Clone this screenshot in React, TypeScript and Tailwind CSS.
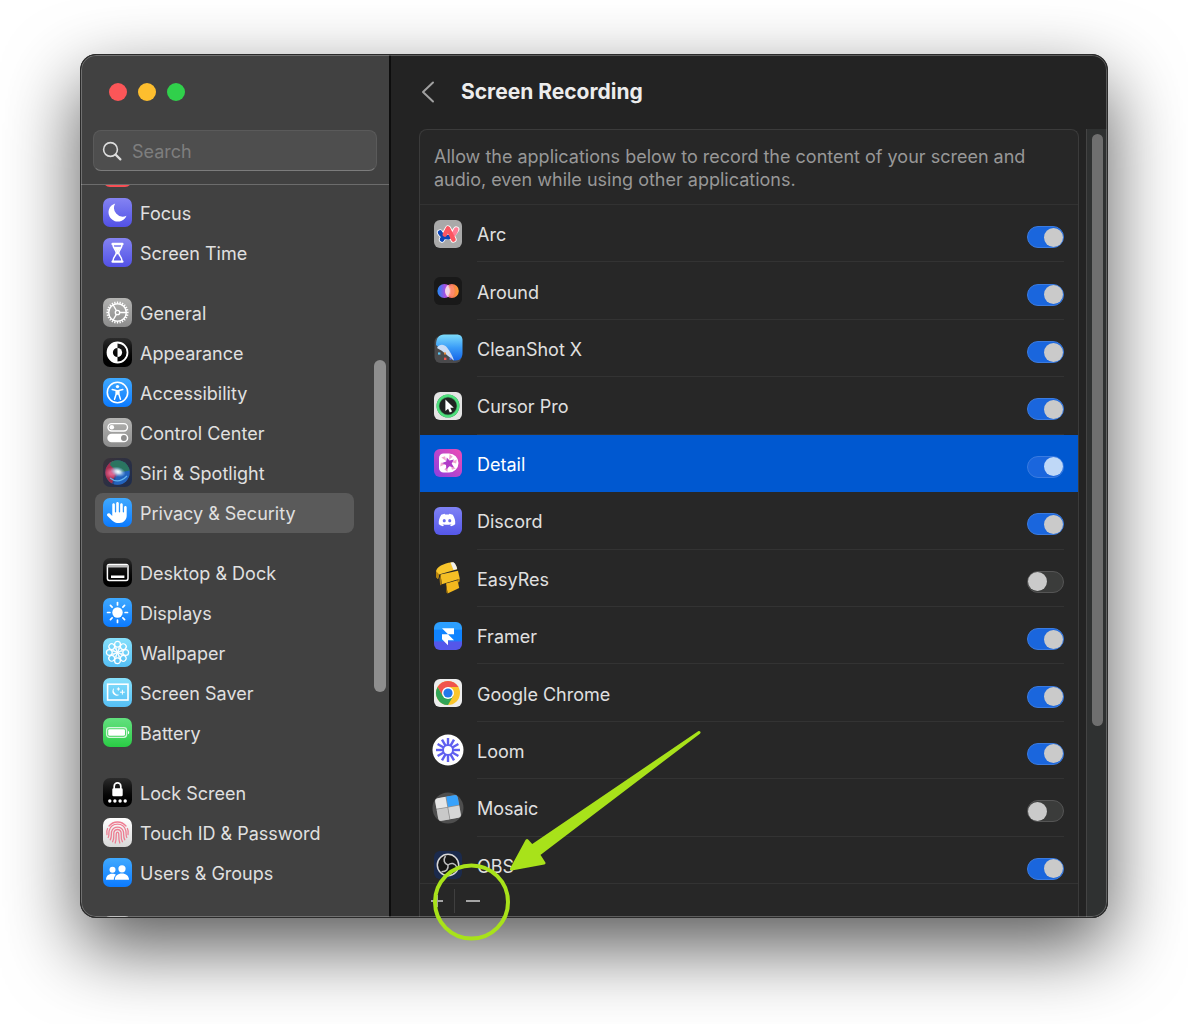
import { useState, type ReactNode } from 'react';
import { FaDiscord, FaHand } from 'react-icons/fa6';
import clsx from 'clsx';

const PURPLE = 'bg-linear-to-b from-[#8583f2] to-[#5350e6]';
const GRAY = 'bg-linear-to-b from-[#b4b4b2] to-[#8c8c8c]';
const BLACK = 'bg-linear-to-b from-[#2c2c2c] to-black';
const BLUE = 'bg-linear-to-b from-[#3fa9ff] to-[#0a7aff]';
const CYAN = 'bg-linear-to-b from-[#86e0fb] to-[#55bff5]';
const GREEN = 'bg-linear-to-b from-[#62e17f] to-[#28cc44]';

function Glyph({ children }: { children: ReactNode }) {
    return (
        <svg viewBox="0 0 29 29" className="size-[29px]" fill="none" aria-hidden="true">
            {children}
        </svg>
    );
}

const ring = (count: number) => Array.from({ length: count }, (_, i) => (360 / count) * i);

const glyphs: Record<string, ReactNode> = {
    focus: (
        <Glyph>
            <path d="M12.2 5.4a9.3 9.3 0 1 0 11.3 12.3A8.8 8.8 0 0 1 12.2 5.4z" fill="#fff" />
        </Glyph>
    ),
    hourglass: (
        <Glyph>
            <path d="M9.6 6h9.8M9.6 23.6h9.8" stroke="#fff" strokeWidth="2.4" strokeLinecap="round" />
            <path d="M10 6.5c0 4.2 3.3 5 3.3 8.2S10 18.6 10 23M19 6.5c0 4.2-3.3 5-3.3 8.2s3.3 3.9 3.3 8.3" stroke="#fff" strokeWidth="1.6" />
            <path d="M10.6 8.800h7.800c-.7 2-2.800 3.200-3.200 5v2.500h-1.400v-2.500c-.4-1.800-2.500-3-3.200-5z" fill="#fff" />
        </Glyph>
    ),
    gear: (
        <Glyph>
            {ring(24).map(a => (
                <path key={a} d="M14.5 3.4v2.2" stroke="#fff" strokeWidth="1.3" transform={`rotate(${a} 14.5 14.5)`} />
            ))}
            <circle cx="14.5" cy="14.5" r="8.8" stroke="#fff" strokeWidth="1.5" />
            <circle cx="14.5" cy="14.5" r="2.2" stroke="#fff" strokeWidth="1.3" />
            {[90, 210, 330].map(a => (
                <path key={a} d="M14.5 12.3V5.7" stroke="#fff" strokeWidth="1.3" transform={`rotate(${a} 14.5 14.5)`} />
            ))}
        </Glyph>
    ),
    appearance: (
        <Glyph>
            <circle cx="14.5" cy="14.5" r="10" stroke="#fff" strokeWidth="1.8" />
            <path d="M14.5 4.5a10 10 0 0 0 0 20v-5.400a4.600 4.600 0 0 1 0-9.200z" fill="#fff" />
            <path d="M14.5 9.900a4.600 4.600 0 0 1 0 9.200z" fill="#fff" />
        </Glyph>
    ),
    accessibility: (
        <Glyph>
            <circle cx="14.5" cy="14.5" r="10.2" stroke="#fff" strokeWidth="1.6" />
            <circle cx="14.5" cy="8.6" r="1.7" fill="#fff" />
            <path d="M9.2 11.6l4 .9v3.500L11.5 21.200M19.800 11.600l-4 .9v3.500l1.700 5.200" stroke="#fff" strokeWidth="1.5" strokeLinecap="round" strokeLinejoin="round" />
            <path d="M12.800 12h3.400v4.800h-3.400z" fill="#fff" />
        </Glyph>
    ),
    controls: (
        <Glyph>
            <rect x="5" y="5.6" width="19.5" height="7.4" rx="3.7" stroke="#fff" strokeWidth="1.4" />
            <circle cx="8.8" cy="9.3" r="2.3" fill="#fff" />
            <rect x="4.3" y="15.7" width="21" height="8.6" rx="4.3" fill="#fff" />
            <circle cx="20.900" cy="20" r="2.900" fill="#8f8f8f" />
        </Glyph>
    ),
    siri: (
        <Glyph>
            <defs>
                <radialGradient id="siri-core">
                    <stop offset="0" stopColor="#fff" />
                    <stop offset=".35" stopColor="#cfe6f5" stopOpacity=".9" />
                    <stop offset="1" stopColor="#7fb4e8" stopOpacity="0" />
                </radialGradient>
                <radialGradient id="siri-pink">
                    <stop offset=".3" stopColor="#e0628c" />
                    <stop offset="1" stopColor="#e0628c" stopOpacity="0" />
                </radialGradient>
                <clipPath id="siri-orb">
                    <circle cx="14.5" cy="14.5" r="12.2" />
                </clipPath>
            </defs>
            <g clipPath="url(#siri-orb)">
                <rect width="29" height="29" fill="#2b4a8c" />
                <path d="M0 0h10l3 13-5 16H0z" fill="#a52f4e" />
                <path d="M9 0h20v13l-14 2-8-8z" fill="#2a7560" />
                <path d="M14 15l15-3v17H10z" fill="#2263bd" />
                <path d="M7 20c5 4 11 4 17-2" stroke="#64b4ee" strokeWidth="1.2" />
                <ellipse cx="9" cy="15" rx="7.500" ry="6" fill="url(#siri-pink)" />
            </g>
            <ellipse cx="15" cy="13.8" rx="8" ry="5" fill="url(#siri-core)" transform="rotate(18 15 14)" />
        </Glyph>
    ),
    desktop: (
        <Glyph>
            <rect x="4.400" y="6.400" width="20.600" height="16" rx="1.800" stroke="#fff" strokeWidth="1.5" />
            <path d="M4.500 7h20.400v2.600H4.500z" fill="#bbb" />
            <path d="M8 17.400h13.400v2.600H8z" fill="#fff" />
        </Glyph>
    ),
    sun: (
        <Glyph>
            <circle cx="14.5" cy="14.5" r="5.2" fill="#fff" />
            {ring(8).map(a => (
                <path key={a} d="M14.5 4.500v2.400" stroke="#fff" strokeWidth="1.7" strokeLinecap="round" transform={`rotate(${a} 14.5 14.5)`} />
            ))}
        </Glyph>
    ),
    flower: (
        <Glyph>
            {ring(8).map(a => (
                <g key={a} transform={`rotate(${a} 14.5 14.5)`}>
                    <circle cx="14.5" cy="6.300" r="2.900" stroke="#fff" strokeWidth="1.300" />
                    <path d="M14.5 14.5l-1.700-5.600M14.5 14.5l1.700-5.600" stroke="#fff" strokeWidth=".9" />
                </g>
            ))}
        </Glyph>
    ),
    saver: (
        <Glyph>
            <rect x="4.600" y="6.200" width="20.400" height="15.800" stroke="#fff" strokeWidth="1.600" />
            <path d="M11 10a4.200 4.200 0 1 0 5.400 6.800A5 5 0 0 1 11 10z" fill="#fff" />
            <path d="M19.400 12.200v4M17.400 14.200h4M15.400 9.800v2.400M14.200 11h2.400" stroke="#fff" strokeWidth="1" strokeLinecap="round" />
        </Glyph>
    ),
    battery: (
        <Glyph>
            <rect x="3.600" y="9.600" width="20" height="9.800" rx="2.800" stroke="#d5f5dc" strokeWidth="1.300" />
            <rect x="5.200" y="11.200" width="16.800" height="6.600" rx="1.400" fill="#fff" />
            <path d="M25 12.700c1.600.5 1.600 3.100 0 3.600z" fill="#fff" />
        </Glyph>
    ),
    lock: (
        <Glyph>
            <path d="M11.200 11.500V8.200a3.300 3.300 0 0 1 6.600 0v3.300" stroke="#fff" strokeWidth="1.700" />
            <rect x="9.300" y="10.300" width="10.400" height="8" rx="1.400" fill="#fff" />
            {[6.8, 11.9, 17.1, 22.2].map(x => (
                <circle key={x} cx={x} cy="23" r="1.700" fill="#fff" />
            ))}
        </Glyph>
    ),
    fingerprint: (
        <Glyph>
            <g stroke="#ee7d92" strokeWidth="1.300" strokeLinecap="round">
                <path d="M6 8a11 11 0 0 1 17 0" />
                <path d="M4 16.500c-.6-2.500-.2-4.500.6-6M25 16.500c.6-2.500.2-4.500-.6-6" />
                <path d="M5.200 19.500c1.200-2 .3-4.500 1-7a8.600 8.600 0 0 1 16.600 0c.6 2.500-.2 5 1 7" />
                <path d="M7.200 21.800c1.800-2.800.8-5.600 1.400-8.300a6.200 6.200 0 0 1 11.800 0c.6 2.700-.4 5.500 1.400 8.300" />
                <path d="M9.600 23.700c2.200-3.700.6-7 1.400-9.700a3.700 3.700 0 0 1 7 0c.8 2.700-.8 6 1.400 9.700" />
                <path d="M12.200 25c1.600-4 .6-7.500 1.200-9.800.4-1.400 1.800-1.400 2.200 0 .6 2.300-.4 5.800 1.200 9.800" />
            </g>
        </Glyph>
    ),
    users: (
        <Glyph>
            <circle cx="9.500" cy="11.700" r="3" fill="#fff" />
            <path d="M3 21.800c0-3.800 2.600-6 6.200-6 1.600 0 2.700.3 3.700 1-1.400 1.400-2 2.900-2.100 5z" fill="#fff" />
            <circle cx="19" cy="10.800" r="3.600" fill="#fff" />
            <path d="M11.800 21.800c0-4 3-6.300 7.100-6.300s7.100 2.300 7.100 6.300z" fill="#fff" />
        </Glyph>
    ),
    hand: <FaHand className="size-[21px] text-white" aria-hidden="true" />,
    blank: null,
};

interface NavItem {
    label: string;
    glyph: string;
    tile: string;
}

const navGroups: NavItem[][] = [
    [
        { label: '', glyph: 'blank', tile: 'bg-[#f84f55]' },
        { label: 'Focus', glyph: 'focus', tile: PURPLE },
        { label: 'Screen Time', glyph: 'hourglass', tile: PURPLE },
    ],
    [
        { label: 'General', glyph: 'gear', tile: GRAY },
        { label: 'Appearance', glyph: 'appearance', tile: BLACK },
        { label: 'Accessibility', glyph: 'accessibility', tile: BLUE },
        { label: 'Control Center', glyph: 'controls', tile: GRAY },
        { label: 'Siri & Spotlight', glyph: 'siri', tile: 'bg-linear-to-br from-[#3a3238] to-[#1d2c4d]' },
        { label: 'Privacy & Security', glyph: 'hand', tile: BLUE },
    ],
    [
        { label: 'Desktop & Dock', glyph: 'desktop', tile: BLACK },
        { label: 'Displays', glyph: 'sun', tile: BLUE },
        { label: 'Wallpaper', glyph: 'flower', tile: CYAN },
        { label: 'Screen Saver', glyph: 'saver', tile: CYAN },
        { label: 'Battery', glyph: 'battery', tile: GREEN },
    ],
    [
        { label: 'Lock Screen', glyph: 'lock', tile: BLACK },
        { label: 'Touch ID & Password', glyph: 'fingerprint', tile: 'bg-linear-to-b from-white to-[#d8d8d8]' },
        { label: 'Users & Groups', glyph: 'users', tile: BLUE },
    ],
];

function AppIcon({ children }: { children: ReactNode }) {
    return (
        <svg viewBox="0 0 32 32" className="size-8 shrink-0" fill="none" aria-hidden="true">
            {children}
        </svg>
    );
}

const appIcons: Record<string, ReactNode> = {
    Arc: (
        <AppIcon>
            <rect x="2" y="2" width="28" height="28" rx="6" fill="#a9a9a9" />
            <g strokeLinecap="round" strokeLinejoin="round">
                <path d="M8 14.500c3 5.500 11 6 16.200-3M10 21.500L16 10.500l5.500 11" stroke="#fff" strokeWidth="6.200" />
                <path d="M24.200 11.500c-1.200 3.500-3 5.600-5.500 7" stroke="#ff7d96" strokeWidth="4.600" />
                <path d="M8 14.500c1.600 3 4.600 4.800 8.500 4.600M10 21.500l1.300-2.500" stroke="#0b45b8" strokeWidth="4.600" />
                <path d="M12.800 16.500L16 10.500l5.500 11" stroke="#fb5560" strokeWidth="4.600" />
            </g>
        </AppIcon>
    ),
    Around: (
        <AppIcon>
            <defs>
                <linearGradient id="around-left" x1="0" y1="0" x2="1" y2="0">
                    <stop stopColor="#1f8af5" />
                    <stop offset=".6" stopColor="#b14be0" />
                    <stop offset="1" stopColor="#f08cd0" />
                </linearGradient>
                <linearGradient id="around-right" x1="0" y1="0" x2="1" y2="0">
                    <stop stopColor="#e8508c" />
                    <stop offset="1" stopColor="#ffa02c" />
                </linearGradient>
            </defs>
            <rect x="2" y="2" width="28" height="28" rx="6" fill="#191919" />
            <circle cx="19.800" cy="16" r="7" fill="url(#around-right)" />
            <circle cx="12.400" cy="16" r="7" fill="url(#around-left)" />
            <path d="M16 10c-4 3-4 9 0 12 4-3 4-9 0-12z" fill="#f3d3e6" />
            <path d="M20.500 10.500c2.800 3 2.800 8.500 0 11-1.500 0-3-.3-4.500-1 2.500-2.500 2.500-6.500 0-9 1.500-.8 3-1 4.500-1z" fill="#ff8f70" opacity=".8" />
        </AppIcon>
    ),
    'CleanShot X': (
        <AppIcon>
            <defs>
                <linearGradient id="cleanshot" x1="0" y1="0" x2="0" y2="1">
                    <stop stopColor="#7ddcfb" />
                    <stop offset=".5" stopColor="#3b9df8" />
                    <stop offset="1" stopColor="#1565e8" />
                </linearGradient>
            </defs>
            <rect x="2.500" y="3" width="27" height="27" rx="6" fill="#4a4a4c" />
            <path d="M4 12c0-7 3-10.500 8-10.500h12.500c4 0 6 2 6 6V20c0 4-2 7.500-7 7.500h-2z" fill="url(#cleanshot)" />
            <path d="M5 15c2-4 7-4.500 10-.5 3 4 5.500 8 7 13-6-4-10-9-17-12.500z" fill="#c9dcf6" />
            <path d="M6 20.500h2.400" stroke="#59c7f5" strokeWidth="2.200" />
            <path d="M12 20.500h2" stroke="#e8893a" strokeWidth="1.800" />
            <path d="M12 25.800h2.400" stroke="#f0524f" strokeWidth="2.400" />
            <path d="M17.500 25.800h2" stroke="#5a6be0" strokeWidth="2" />
        </AppIcon>
    ),
    'Cursor Pro': (
        <AppIcon>
            <rect x="2" y="2" width="28" height="28" rx="6" fill="#e4e4e4" />
            <circle cx="16" cy="16" r="11.500" fill="#3c9b5c" />
            <circle cx="16" cy="16" r="10.300" stroke="#4ee07c" strokeWidth="2.200" />
            <circle cx="16" cy="16" r="8.600" fill="#202322" />
            <path d="M13.400 9.500v11.600l2.700-2.400 1.700 3.700 2.200-1-1.700-3.600h3.500z" fill="#fff" />
        </AppIcon>
    ),
    Detail: (
        <AppIcon>
            <defs>
                <linearGradient id="detail" x1="1" y1="0" x2="0" y2="1">
                    <stop stopColor="#f04cb4" />
                    <stop offset="1" stopColor="#8b3fe0" />
                </linearGradient>
            </defs>
            <rect x="2" y="2" width="28" height="28" rx="6" fill="url(#detail)" />
            <path d="M7 11a4.500 4.500 0 0 1 4.500-4.500H17a9.500 9.500 0 0 1 0 19h-5.500A4.500 4.500 0 0 1 7 21z" fill="#fff" />
            {ring(6).map(a => (
                <path key={a} d="M16 7l3.500 2-3 4z" fill="#f0a6d0" transform={`rotate(${a + 10} 16.5 16)`} />
            ))}
            <path d="M14.800 10.500l2.700 3 4.500-.9-2.300 3.800 2.300 4-4.600-1.200-3 3.200-.4-4.400-4-2 4.200-1.500z" fill="#b03cc8" />
        </AppIcon>
    ),
    Discord: (
        <AppIcon>
            <defs>
                <linearGradient id="discord" x1="0" y1="0" x2="0" y2="1">
                    <stop stopColor="#7f82f5" />
                    <stop offset="1" stopColor="#5557e8" />
                </linearGradient>
            </defs>
            <rect x="2" y="2" width="28" height="28" rx="6" fill="url(#discord)" />
            <FaDiscord x="6" y="6" width="20" height="20" color="#fff" />
        </AppIcon>
    ),
    EasyRes: (
        <AppIcon>
            <path d="M4 9C6 3 16 .5 21 .3c2.500 1.200 3.400 4 4.200 7L7 12.500 6 17 4.200 15z" fill="#f7c52c" />
            <path d="M4 9l3.300 3.500L6 17l-2-2z" fill="#b5820f" />
            <path d="M18.500.6l3-.3c2 1.500 3 4 3.700 6.800l-3.700 1z" fill="#efefef" />
            <path d="M8.500 12.500L26 8.800l1.800 8-18 5.500z" fill="#f5bf25" />
            <path d="M8.500 12.500l1.300 9.800-1.600 1.200-.7-7z" fill="#a8790f" />
            <path d="M14 21.500l11.600-3.300 1.600 7.800-11.600 5.500z" fill="#f3b81e" />
            <path d="M14 21.500l1.600 10-1.400-1z" fill="#8f6609" />
            <path d="M25.500 17.500l2.300-.7-.4 3-1.500 1z" fill="#c18c10" />
        </AppIcon>
    ),
    Framer: (
        <AppIcon>
            <defs>
                <linearGradient id="framer" x1="0" y1="0" x2="0" y2="1">
                    <stop offset=".25" stopColor="#2c9fff" />
                    <stop offset=".3" stopColor="#0f83ff" />
                    <stop offset=".65" stopColor="#0f83ff" />
                    <stop offset=".72" stopColor="#5457ea" />
                </linearGradient>
            </defs>
            <rect x="2" y="2" width="28" height="28" rx="6" fill="url(#framer)" />
            <path d="M10 8.200h12v6h-6l6 6h-6v5l-6-6v-5h6z" fill="#fff" />
        </AppIcon>
    ),
    'Google Chrome': (
        <AppIcon>
            <rect x="2" y="2" width="28" height="28" rx="6" fill="#ededed" />
            <circle cx="16" cy="16" r="12" fill="#fbc62b" />
            <path d="M5.600 10A12 12 0 0 1 26.400 10H16l-5.200 9z" fill="#f0534c" />
            <path d="M5.600 10a12 12 0 0 0 10.400 18l5.200-9H10.800z" fill="#31a457" />
            <circle cx="16" cy="16" r="6" fill="#fff" />
            <circle cx="16" cy="16" r="4.600" fill="#2478ea" />
        </AppIcon>
    ),
    Loom: (
        <AppIcon>
            <circle cx="16" cy="16" r="15.500" fill="#fff" />
            {ring(12).map(a => (
                <path key={a} d="M16 4v7.500" stroke="#5f5ff0" strokeWidth="2.400" transform={`rotate(${a} 16 16)`} />
            ))}
            <circle cx="16" cy="16" r="5" stroke="#5f5ff0" strokeWidth="2" fill="#fff" />
        </AppIcon>
    ),
    Mosaic: (
        <AppIcon>
            <circle cx="16" cy="16" r="15.500" fill="#4e4e4e" />
            <g transform="rotate(-10 16 16)">
                <rect x="4.500" y="4.500" width="23" height="23" rx="3" fill="#8f8f8f" />
                <path d="M15.500 4.500v10.300h-11V7.500a3 3 0 0 1 3-3z" fill="#e6e6e6" />
                <path d="M16.300 4.500h8.200a3 3 0 0 1 3 3v7.300H16.300z" fill="#38a2fb" />
                <path d="M4.500 15.600h11v11.900h-8a3 3 0 0 1-3-3z" fill="#c9c9c9" />
                <path d="M16.300 15.600h11.200v8.900a3 3 0 0 1-3 3h-8.200z" fill="#d6d6d6" />
            </g>
        </AppIcon>
    ),
    OBS: (
        <AppIcon>
            <rect x="2" y="2" width="28" height="28" rx="6" fill="#1b2a4c" />
            <circle cx="16" cy="16" r="10.700" fill="#171717" stroke="#d8d8d8" strokeWidth="1.500" />
            {[0, 120, 240].map(a => (
                <path key={a} d="M16 16c-4-1.500-5-5-2.500-9" stroke="#bdbdbd" strokeWidth="1.500" transform={`rotate(${a} 16 16)`} />
            ))}
        </AppIcon>
    ),
};

const initialApps = [
    { name: 'Arc', on: true },
    { name: 'Around', on: true },
    { name: 'CleanShot X', on: true },
    { name: 'Cursor Pro', on: true },
    { name: 'Detail', on: true },
    { name: 'Discord', on: true },
    { name: 'EasyRes', on: false },
    { name: 'Framer', on: true },
    { name: 'Google Chrome', on: true },
    { name: 'Loom', on: true },
    { name: 'Mosaic', on: false },
    { name: 'OBS', on: true },
];

function Sidebar() {
    return (
        <aside className="relative flex w-[310px] shrink-0 flex-col border-r-2 border-black/80 bg-[#414141]">
            <div className="border-b border-[#6c6c6c] px-3 pt-7 pb-[13px]">
                <div className="flex gap-[11px] px-4">
                    <button aria-label="Close" className="size-[18px] rounded-full bg-[#fc5658]" />
                    <button aria-label="Minimize" className="size-[18px] rounded-full bg-[#fdbe2e]" />
                    <button aria-label="Zoom" className="size-[18px] rounded-full bg-[#30d04b]" />
                </div>
                <label className="mt-[29px] flex h-[41px] items-center gap-2.5 rounded-lg border border-[#5a5a5a] border-b-[#7c7c7c] bg-[#4e4e4e] px-2">
                    <svg viewBox="0 0 20 20" className="size-5 shrink-0" fill="none" stroke="#dcdcdc" strokeLinecap="round" aria-hidden="true">
                        <circle cx="8.500" cy="8.500" r="6.900" strokeWidth="1.600" />
                        <path d="M13.600 13.600l4.800 4.800" strokeWidth="2.200" />
                    </svg>
                    <input
                        type="search"
                        aria-label="Search"
                        placeholder="Search"
                        className="min-w-0 flex-1 bg-transparent pt-0.5 outline-none placeholder:text-[#7e7e7e]"
                    />
                </label>
            </div>

            <div className="min-h-0 flex-1 overflow-hidden">
                <nav className="-mt-8 px-3.5">
                    {navGroups.map((group, i) => (
                        <div key={i} className="mb-5">
                            {group.map(item => (
                                <a
                                    key={item.glyph}
                                    href="#"
                                    className={clsx(
                                        'flex h-10 w-[259px] items-center gap-2 rounded-lg px-2 pb-0.5',
                                        item.glyph === 'hand' && 'bg-[#5a5a5a]'
                                    )}
                                >
                                    <span className={clsx('flex size-[29px] shrink-0 items-center justify-center overflow-hidden rounded-[7px]', item.tile)}>
                                        {glyphs[item.glyph]}
                                    </span>
                                    <span className="pt-[3px]">{item.label}</span>
                                </a>
                            ))}
                        </div>
                    ))}
                    <span className="mt-[23px] ml-2 block size-[29px] rounded-[7px] bg-[#a8a8a8]" />
                </nav>
            </div>

            {/* Scroll thumb */}
            <div className="absolute top-[305px] right-[3px] h-[332px] w-3 rounded-full bg-[#8e8e8e]" />
        </aside>
    );
}

function Panel() {
    const [apps, setApps] = useState(initialApps);
    const [selected, setSelected] = useState('Detail');

    const toggle = (name: string) =>
        setApps(apps.map(app => (app.name === name ? { ...app, on: !app.on } : app)));

    return (
        <section className="flex min-h-0 min-w-0 flex-1 flex-col rounded-t-lg border border-b-0 border-[#3b3b3b] bg-[#272727]">
            <p className="border-b border-[#323232] px-3.5 pt-[15px] pb-[13px] leading-[23px] text-[#989898]">
                Allow the applications below to record the content of your screen and
                <br />
                audio, even while using other applications.
            </p>

            <div className="min-h-0 flex-1 overflow-hidden">
                <ul className="grid h-[689px] auto-rows-fr">
                    {apps.map(app => (
                        <li
                            key={app.name}
                            onClick={() => setSelected(app.name)}
                            className={clsx('flex gap-[13px] pl-3', app.name === selected && 'bg-[#0058d0]')}
                        >
                            <span className="flex items-center">{appIcons[app.name]}</span>
                            <label
                                className={clsx(
                                    'mr-3.5 flex flex-1 items-center justify-between border-b pt-1',
                                    app.name === selected ? 'border-transparent text-white' : 'border-[#333333]'
                                )}
                            >
                                {app.name}
                                <input
                                    type="checkbox"
                                    checked={app.on}
                                    onChange={() => toggle(app.name)}
                                    className={clsx(
                                        'mt-1 flex h-[22px] w-[37px] appearance-none items-center rounded-full border',
                                        'before:size-[19px] before:shrink-0 before:rounded-full before:content-[""]',
                                        app.name === selected ? 'before:bg-[#bfd8f7]' : 'before:bg-[#cacaca]',
                                        app.on ? 'justify-end border-[#3a7be0] bg-[#1a66dd]' : 'justify-start border-[#555555] bg-[#3b3c3b]'
                                    )}
                                />
                            </label>
                        </li>
                    ))}
                </ul>
            </div>

            <div className="flex h-[35px] shrink-0 items-center border-t border-[#333333] pl-2.5 text-[#a5a5a5]">
                <button aria-label="Add application" className="w-6">
                    <svg viewBox="0 0 14 14" className="size-3.5" stroke="currentColor" strokeWidth="2" aria-hidden="true">
                        <path d="M1 7h12M7 1v12" />
                    </svg>
                </button>
                <span className="h-6 w-px bg-[#3f3f3f]" />
                <button aria-label="Remove application" className="pl-[11px]">
                    <svg viewBox="0 0 14 14" className="size-3.5" stroke="currentColor" strokeWidth="2" aria-hidden="true">
                        <path d="M0 7h14" />
                    </svg>
                </button>
            </div>
        </section>
    );
}

function Annotation() {
    return (
        <svg
            viewBox="0 0 290 220"
            className="pointer-events-none absolute -bottom-[26px] left-[340px] h-[220px] w-[290px]"
            fill="#a8e21a"
            stroke="#a8e21a"
            strokeLinejoin="round"
            aria-hidden="true"
        >
            <path d="M279 8.500L112 122l-5-5.500-15.500 28.500 32.500-6-5.500-8.500z" strokeWidth="3" />
            <circle cx="51.500" cy="178" r="36.500" fill="none" strokeWidth="4" />
        </svg>
    );
}

export default function App() {
    return (
        <div className="flex h-screen bg-white px-20 pt-[54px] pb-[106px] font-['Inter','Liberation_Sans',sans-serif] text-lg text-[#e0e0e0]">
            <div className="relative flex min-w-0 flex-1">
                <div className="relative flex min-w-0 flex-1 overflow-hidden rounded-2xl bg-[#232323] pt-px pl-px shadow-[0_29px_75px_rgba(0,0,0,0.66)]">
                    <Sidebar />
                    <main className="flex min-w-0 flex-1 flex-col">
                        <header className="flex h-[74px] shrink-0 items-center gap-[26px] pl-[30px]">
                            <button aria-label="Back">
                                <svg viewBox="0 0 14 22" className="h-[22px] w-3.5" fill="none" stroke="#a0a0a0" strokeWidth="2" strokeLinecap="round" strokeLinejoin="round" aria-hidden="true">
                                    <path d="M12 1.500L2 11l10 9.500" />
                                </svg>
                            </button>
                            <h1 className="text-[21px] font-bold text-[#ececec]">Screen Recording</h1>
                        </header>
                        <div className="flex min-h-0 flex-1 pl-7">
                            <Panel />
                            <div className="ml-[7px] w-[22px] border-l border-[#444444] bg-[#2f3131] pt-[5px] pl-[5px]">
                                <div className="h-[592px] w-[11px] rounded-full bg-[#6f6f6f]" />
                            </div>
                        </div>
                    </main>
                    <div className="pointer-events-none absolute inset-0 rounded-2xl border border-[#2b2b2b] inset-ring inset-ring-white/25" />
                </div>
                <Annotation />
            </div>
        </div>
    );
}
